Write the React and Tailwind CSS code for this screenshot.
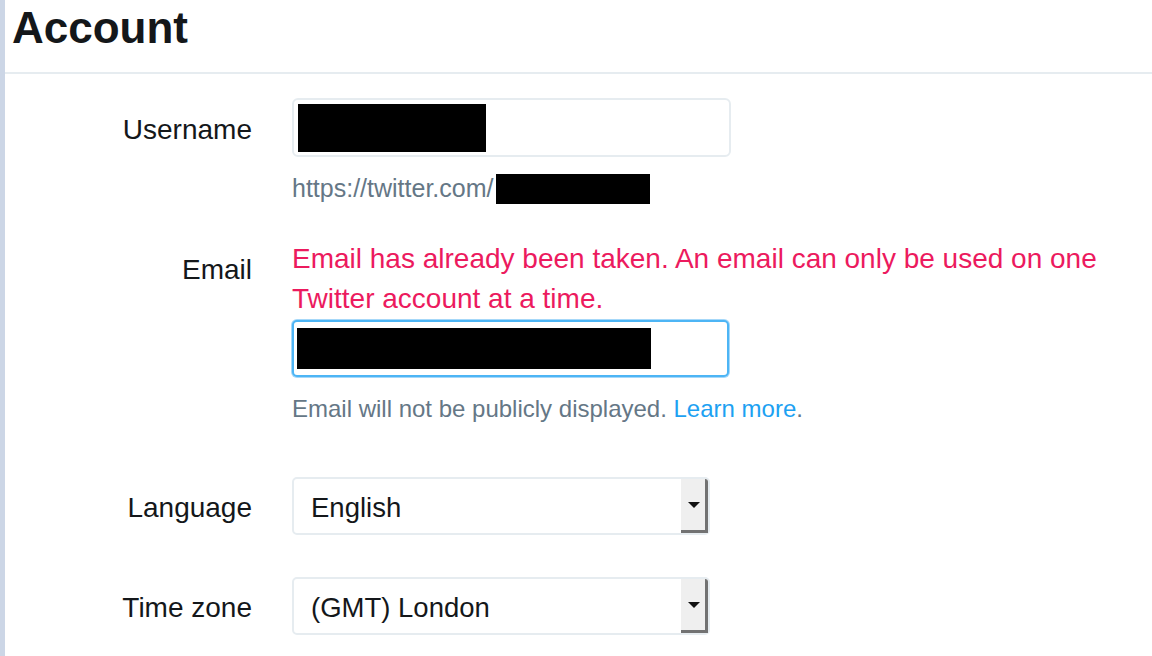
import React from 'react';

const font = { fontFamily: '"Liberation Sans", Arial, sans-serif' };

const Redacted = ({ className }) => <div className={`bg-black ${className}`} />;

const SelectBox = ({ value }) => (
  <div className="flex h-[58px] w-[418px] items-stretch rounded-[5px] border-2 border-[#e6ecf0] bg-white">
    <div className="flex flex-1 items-center pl-[17px] pt-[3px] text-[27.5px] text-[#14171a]">{value}</div>
    {/* old-style select arrow button */}
    <div className="flex w-[27px] items-center justify-center rounded-tr-[3px] border-r-[3px] border-b-[3px] border-[#727272] bg-[#efefef]">
      <svg width="12" height="6" viewBox="0 0 12 6" className="ml-[2px]">
        <path d="M0 0h12L6 6z" fill="#111" />
      </svg>
    </div>
  </div>
);

const Row = ({ label, labelClass = 'pt-[4px]', children, align = 'items-center' }) => (
  <div className={`flex ${align}`}>
    <div className={`w-[247px] shrink-0 text-right text-[28px] text-[#14171a] ${labelClass}`}>{label}</div>
    <div className="ml-[40px] flex flex-col">{children}</div>
  </div>
);

export default function App() {
  return (
    <div className="min-h-[656px] w-[1152px] overflow-hidden border-l-[5px] border-[#ccd6e6] bg-white" style={font}>
      {/* Header */}
      <div className="border-b-2 border-[#e6ecf0] pt-[4px] pb-[20px] pl-[7px]">
        <h1 className="text-[44px] font-bold leading-[48px] text-[#14171a]">Account</h1>
      </div>

      <div className="pt-[24px]">
        {/* Username */}
        <Row label="Username">
          <div className="flex h-[59px] w-[439px] items-center rounded-[6px] border-2 border-[#e6ecf0] bg-white pl-[4px]">
            <Redacted className="h-[48px] w-[188px]" />
          </div>
        </Row>
        <div className="ml-[287px] mt-[17px] flex h-[30px] items-center text-[25px] text-[#657786]">
          <span>https://twitter.com/</span>
          <Redacted className="ml-[3px] h-[30px] w-[154px]" />
        </div>

        {/* Email */}
        <div className="mt-[35px]">
          <Row label="Email" labelClass="mt-[11px] leading-[40px]" align="items-start">
            <p className="text-[28px] leading-[40px] text-[#ec1a5e]">
              Email has already been taken. An email can only be used on one
              <br />
              Twitter account at a time.
            </p>
            <div className="mt-[1px] flex h-[57px] w-[437px] items-center rounded-[5px] border-2 border-[#4db5f5] bg-white pl-[3px] shadow-[0_0_0_1px_#a6d8f9]">
              <Redacted className="h-[41px] w-[354px]" />
            </div>
            <p className="mt-[17px] h-[30px] text-[24px] leading-[30px] text-[#657786]">
              Email will not be publicly displayed. <span className="text-[#1da1f2]">Learn more</span>.
            </p>
          </Row>
        </div>

        {/* Language */}
        <div className="mt-[53px]">
          <Row label="Language">
            <SelectBox value="English" />
          </Row>
        </div>

        {/* Time zone */}
        <div className="mt-[42px]">
          <Row label="Time zone">
            <SelectBox value="(GMT) London" />
          </Row>
        </div>
      </div>
    </div>
  );
}
